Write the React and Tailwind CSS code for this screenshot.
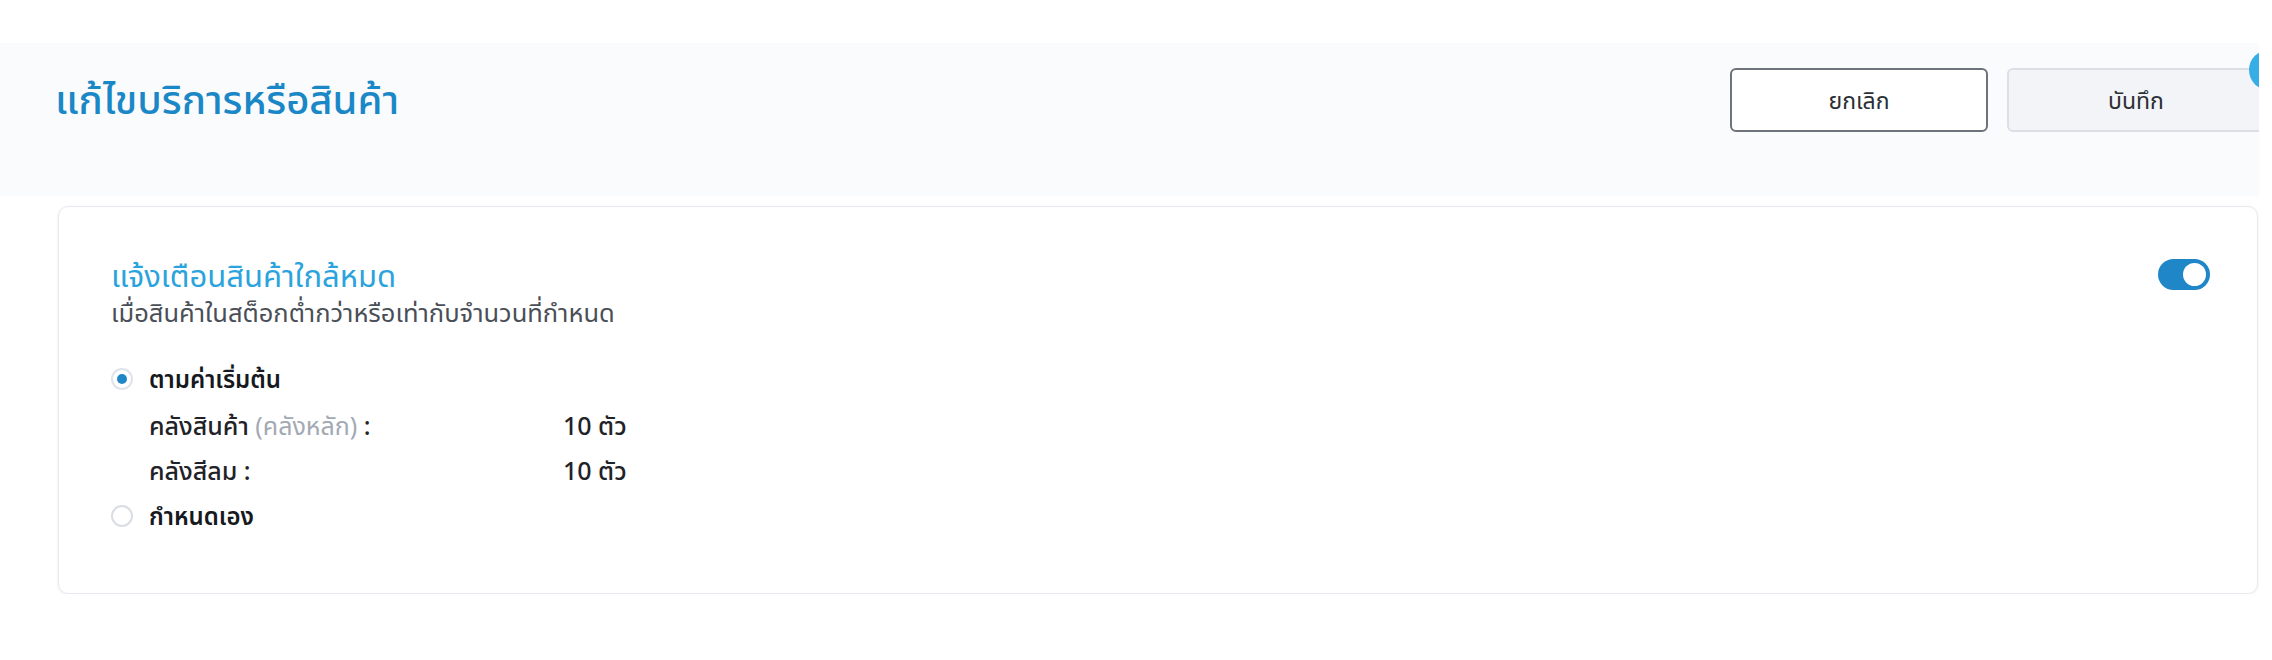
import React, { useState } from "react";

const Radio = ({ checked }) => (
  <span
    className={`flex h-[22px] w-[22px] shrink-0 items-center justify-center rounded-full border-2 bg-white ${
      checked ? "border-[#dfe3ea]" : "border-[#d9dde4]"
    }`}
  >
    {checked && <span className="h-[10px] w-[10px] rounded-full bg-[#1f86c7]" />}
  </span>
);

const StockRow = ({ label, note, value }) => (
  <div className="flex h-[45px] items-center pl-[38px] text-[25px] font-medium text-[#1f2328]">
    <div className="w-[414px]">
      {label}
      {note && <span className="font-normal text-[#a3a9b3]"> {note}</span>} :
    </div>
    <div>{value}</div>
  </div>
);

const App = () => {
  const [enabled, setEnabled] = useState(true);
  const [mode, setMode] = useState("default");

  return (
    <div className="h-[660px] w-full bg-white font-['Noto_Sans','Noto_Sans_Thai',sans-serif]">
      <div className="relative w-[2259px] overflow-hidden pt-[43px]">
        {/* Header */}
        <div className="flex h-[153px] items-start justify-between bg-[#fafbfc] pl-[55px]">
          <h1 className="mt-[30px] text-[40px] leading-[52px] font-medium text-[#1a87c6]">
            แก้ไขบริการหรือสินค้า
          </h1>
          <div className="mt-[25px] -mr-[6px] flex gap-[19px]">
            <button className="flex h-[64px] w-[258px] items-center justify-center rounded-[6px] border-2 border-[#6e737b] bg-white text-[23px] text-[#2b2f36]">
              ยกเลิก
            </button>
            <button className="flex h-[64px] w-[258px] items-center justify-center rounded-[6px] border-2 border-[#dcdfe6] bg-[#f3f4f7] text-[23px] text-[#2b2f36]">
              บันทึก
            </button>
          </div>
        </div>
        <span className="absolute right-[-30px] top-[50px] h-[40px] w-[40px] rounded-full bg-[#36ade4]" />

        {/* Card */}
        <div className="ml-[58px] mt-[10px] h-[388px] w-[2200px] rounded-[10px] border border-[#e7e9ee] bg-white pl-[52px] pr-[47px] pt-[48px] shadow-[0_1px_4px_rgba(0,0,0,0.06)]">
          <div className="flex items-start justify-between">
            <div>
              <h2 className="text-[31px] leading-[40px] text-[#2ba3dc]">แจ้งเตือนสินค้าใกล้หมด</h2>
              <p className="mt-[1px] text-[25.5px] leading-[32px] text-[#4a4f57]">
                เมื่อสินค้าในสต็อกต่ำกว่าหรือเท่ากับจำนวนที่กำหนด
              </p>
            </div>
            <button
              onClick={() => setEnabled(!enabled)}
              className={`mt-[4px] flex h-[31px] w-[52px] items-center rounded-full p-[4px] ${
                enabled ? "justify-end bg-[#1f86c7]" : "justify-start bg-gray-300"
              }`}
            >
              <span className="h-[23px] w-[23px] rounded-full bg-white" />
            </button>
          </div>

          <div className="mt-[27px]">
            <label
              className="flex h-[48px] items-center gap-[16px] text-[24px] font-semibold text-[#16191d]"
              onClick={() => setMode("default")}
            >
              <Radio checked={mode === "default"} />
              ตามค่าเริ่มต้น
            </label>
            <StockRow label="คลังสินค้า" note="(คลังหลัก)" value="10 ตัว" />
            <StockRow label="คลังสีลม" value="10 ตัว" />
            <label
              className="flex h-[46px] items-center gap-[16px] text-[24px] font-semibold text-[#16191d]"
              onClick={() => setMode("custom")}
            >
              <Radio checked={mode === "custom"} />
              กำหนดเอง
            </label>
          </div>
        </div>
      </div>
    </div>
  );
};

export default App;
